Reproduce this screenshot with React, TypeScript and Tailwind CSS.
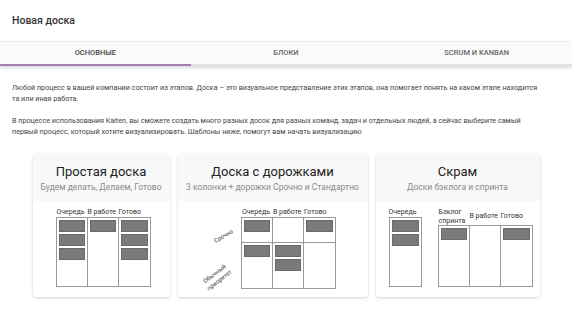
import React from "react";

const font = { fontFamily: "Roboto, 'Noto Sans', sans-serif" };

function Card({ n = 0 }: { n?: number }) {
  const items = Array.from({ length: n });
  return (
    <div className="flex flex-col gap-[2px] p-[2px]">
      {items.map((_, i) => (
        <div key={i} className="h-[12px] bg-[#7a7a7a] border border-[#6a6a6a]" />
      ))}
    </div>
  );
}

function Cell({ n = 0, last = false }: { n?: number; last?: boolean }) {
  return (
    <div className={last ? "w-[31px]" : "w-[31px] border-r border-[#999]"}>
      <Card n={n} />
    </div>
  );
}

function Labels({ items }: { items: string[] }) {
  return (
    <div className="flex text-[7px] leading-[9px] text-[#333]">
      {items.map((t) => (
        <div key={t} className="w-[31px] whitespace-nowrap pl-[1px]">
          {t}
        </div>
      ))}
    </div>
  );
}

function CardShell({
  width,
  title,
  subtitle,
  children,
}: {
  width: string;
  title: string;
  subtitle: string;
  children: React.ReactNode;
}) {
  return (
    <div className={`${width} bg-white rounded-[3px] shadow-[0_1px_3px_rgba(0,0,0,0.18)] overflow-hidden`}>
      <div className="bg-[#f8f8f8] pt-[9px] pb-[8px] text-center">
        <div className="text-[13px] leading-[17px] text-[#222]">{title}</div>
        <div className="text-[8.5px] leading-[12px] mt-[1px] text-[#8a8a8a] whitespace-nowrap">{subtitle}</div>
      </div>
      <div className="flex justify-center pt-[7px] pb-[8px]">{children}</div>
    </div>
  );
}

export default function App() {
  return (
    <div className="w-[572px] h-[309px] bg-white overflow-hidden" style={font}>
      {/* Header */}
      <div className="h-[41px] flex items-center px-3">
        <span className="text-[10.5px] font-medium text-[#333]">Новая доска</span>
      </div>

      {/* Tabs */}
      <div className="h-[25px] bg-[#fafafa] border-t border-[#eee] shadow-[0_2px_3px_rgba(0,0,0,0.15)] flex relative">
        <div className="flex-1 flex items-center justify-center text-[7.5px] font-medium text-[#444] border-b-2 border-[#a57db5]">
          ОСНОВНЫЕ
        </div>
        <div className="flex-1 flex items-center justify-center text-[7.5px] font-medium text-[#666] border-b-2 border-[#e2e2e2]">
          БЛОКИ
        </div>
        <div className="flex-1 flex items-center justify-center text-[7.5px] font-medium text-[#666] border-b-2 border-[#e2e2e2]">
          SCRUM И KANBAN
        </div>
      </div>

      {/* Description */}
      <div className="pl-3 pr-3 pt-[16px] text-[7.2px] leading-[11px] text-[#444] whitespace-nowrap">
        <p>
          Любой процесс в вашей компании состоит из этапов. Доска – это визуальное представление этих этапов, она помогает
          понять на каком этапе находится
          <br />
          та или иная работа.
        </p>
        <p className="mt-[11px]">
          В процессе использования Kaiten, вы сможете создать много разных досок для разных команд, задач и отдельных людей, а
          сейчас выберите самый
          <br />
          первый процесс, который хотите визуализировать. Шаблоны ниже, помогут вам начать визуализацию
        </p>
      </div>

      {/* Templates */}
      <div className="flex justify-center gap-2 mt-[17px]">
        <CardShell width="w-[137px]" title="Простая доска" subtitle="Будем делать, Делаем, Готово">
          <div className="ml-[4px]">
            <Labels items={["Очередь", "В работе", "Готово"]} />
            <div className="flex h-[70px] border border-[#999]">
              <Cell n={3} />
              <Cell n={1} />
              <Cell n={3} last />
            </div>
          </div>
        </CardShell>

        <CardShell width="w-[190px]" title="Доска с дорожками" subtitle="3 колонки + дорожки Срочно и Стандартно">
          <div className="flex ml-[-4px]">
            <div className="w-[36px] pt-[9px] flex flex-col text-[6px] leading-[7.5px] text-[#333]">
              <div className="h-[25px] flex items-end justify-center pb-[1px]">
                <span className="-rotate-[30deg] translate-y-[-2px]">Срочно</span>
              </div>
              <div className="h-[45px] flex items-end justify-center">
                <span className="-rotate-[38deg] text-center translate-x-[-6px] translate-y-[-3px]">
                  Обычный
                  <br />
                  приоритет
                </span>
              </div>
            </div>
            <div>
              <Labels items={["Очередь", "В работе", "Готово"]} />
              <div className="border border-[#999]">
                <div className="flex h-[25px] border-b border-[#999]">
                  <Cell n={1} />
                  <Cell n={0} />
                  <Cell n={1} last />
                </div>
                <div className="flex h-[45px]">
                  <Cell n={1} />
                  <Cell n={2} />
                  <Cell n={0} last />
                </div>
              </div>
            </div>
          </div>
        </CardShell>

        <CardShell width="w-[164px]" title="Скрам" subtitle="Доски бэклога и спринта">
          <div className="flex items-end gap-[16px] ml-[6px]">
            <div>
              <div className="text-[7px] leading-[9px] text-[#333] whitespace-nowrap">Очередь</div>
              <div className="h-[70px] border border-[#999] w-[33px]">
                <Cell n={2} last />
              </div>
            </div>
            <div>
              <div className="flex items-center h-[17px] text-[7px] leading-[9px] text-[#333]">
                <div className="w-[31px] pl-[1px]">
                  Бэклог
                  <br />
                  спринта
                </div>
                <div className="w-[31px] pl-[1px] whitespace-nowrap">В работе</div>
                <div className="w-[31px] pl-[1px]">Готово</div>
              </div>
              <div className="flex h-[62px] border border-[#999]">
                <Cell n={1} />
                <Cell n={0} />
                <Cell n={1} last />
              </div>
            </div>
          </div>
        </CardShell>
      </div>
    </div>
  );
}
